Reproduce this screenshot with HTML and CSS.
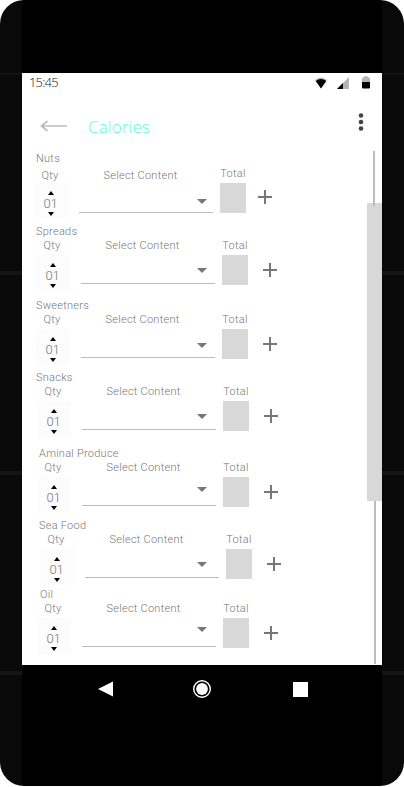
FILE: index.html
```html
<!DOCTYPE html>
<html lang="en">
<head>
<meta charset="utf-8">
<title>Calories</title>
<link rel="stylesheet" href="styles.css">
</head>
<body>
<div class="phone">
  <main class="screen">
    <header class="status">
      <span class="time">15:45</span>
      <svg class="status-icons" width="60" height="16" viewBox="0 0 60 16">
        <path d="M1 5Q7 0 13 5L7 13Z" fill="#b5b5b5"/><path d="M1.700 6Q7 2 12.300 6L7 13.500Z"/>
        <path d="M23 14L35 2V14Z" fill="#b5b5b5"/><path d="M23 14L29 8V14Z"/>
        <path d="M48 7V3.500Q48 2.500 49.500 2.500Q49.800 1 52 1Q54.200 1 54.500 2.500Q56 2.500 56 3.500V7Z" fill="#b5b5b5"/><path d="M48 7H56V12.500Q56 13.500 55 13.500H49Q48 13.500 48 12.500Z"/>
      </svg>
    </header>
    <nav class="toolbar">
      <svg class="back" width="28" height="14" viewBox="0 0 28 14" fill="none" stroke="#bdbdbd" stroke-width="1.700"><path d="M27 7H2M7.500 2L1.500 7L7.500 12"/></svg>
      <h1>Calories</h1>
      <svg class="more" width="6" height="20" viewBox="0 0 6 20" fill="#444"><circle cx="3" cy="3.500" r="2.300"/><circle cx="3" cy="10" r="2.300"/><circle cx="3" cy="16.500" r="2.300"/></svg>
    </nav>
    <div class="content">
      <div class="list" id="list"></div>
      <div class="scrollbar"><i class="track-top"></i><i class="thumb"></i><i class="track-bottom"></i></div>
    </div>
  </main>
  <footer class="navbar">
    <svg width="16" height="16" viewBox="0 0 16 16" fill="#fff"><path d="M0 8L15 .5V15.500Z"/></svg>
    <svg class="home" width="18" height="18" viewBox="0 0 18 18" fill="#fff"><circle cx="9" cy="9" r="8.300" fill="none" stroke="#fff" stroke-width="1.400"/><circle cx="9" cy="9" r="5.900"/></svg>
    <svg width="15" height="15" viewBox="0 0 15 15" fill="#fff"><path d="M0 0H15V15H0Z"/></svg>
  </footer>
</div>
<script src="app.js"></script>
</body>
</html>
```
FILE: styles.css
```css
* { box-sizing: border-box; }
body { margin: 0; background: #fff; font-family: Roboto, "Liberation Sans", sans-serif; }
.phone {
  width: 404px; height: 786px; padding: 73px 22px 0; border-radius: 24px; overflow: hidden;
  background:
    linear-gradient(#000, #000) 22px 0 / 360px 100% no-repeat,
    linear-gradient(#131313, #131313) 0 73px / 100% 2px no-repeat,
    linear-gradient(#151515, #151515) 0 271px / 100% 4px no-repeat,
    linear-gradient(#151515, #151515) 0 471px / 100% 4px no-repeat,
    linear-gradient(#151515, #151515) 0 671px / 100% 4px no-repeat,
    #090909;
}
.screen { height: 592px; background: #fff; overflow: hidden; }
.status { display: flex; justify-content: space-between; height: 20px; padding: 1px 8px 0 7px; }
.time { font: 300 13px/17px "Open Sans", sans-serif; letter-spacing: -.8px; color: #111; }
.status-icons { margin-top: 1px; }
.toolbar { display: flex; height: 58px; padding: 0 18px; }
.back { margin-top: 26px; }
.toolbar h1 { margin: 23px 0 0 20px; font: 300 17px/22px "Open Sans", sans-serif; letter-spacing: .1px; color: #5dffca; }
.more { margin: 19px 0 0 auto; }
.content { display: flex; justify-content: space-between; height: 514px; }
.group { --indent: 14px; --end: 8px; --drop: 15px; height: 72px; color: #777; font-weight: 300; font-size: 11px; line-height: 16px; letter-spacing: .25px; white-space: nowrap; }
.group h2 { margin: 0 0 0 14px; font: inherit; height: 14px; }
.fields { display: flex; padding-left: var(--indent); }
.qty { width: 34px; text-align: center; }
.qty label, .pick label, .total label { display: block; height: 17px; }
.qty label { padding-right: 2px; }
.stepper { display: flex; flex-direction: column; align-items: center; height: 36px; padding-top: 8px; background: #fcfcfc; }
.stepper span { height: 17px; font: 300 13px/18px Roboto, sans-serif; padding-right: 1px; letter-spacing: -.2px; color: #777; }
.stepper svg { display: block; }
.pick { width: 134px; margin-left: 11px; text-align: center; }
.pick label { padding-right: 11px; }
.select { display: flex; justify-content: flex-end; height: 29px; padding: calc(var(--drop) - 2px) var(--end) 0 0; border-bottom: 1px solid #bdbdbd; }
.total { width: 26px; margin-left: 7px; text-align: center; }
.total label { display: flex; justify-content: center; }
.box { height: 30px; background: #d8d8d8; }
.add { margin: 25px 0 0 15px; }
.group:nth-child(1) { --indent: 12px; --end: 6px; --drop: 16px; height: 73px; }
.group:nth-child(1) .fields { padding-top: 3px; }
.group:nth-child(1) .qty label { height: 15px; }
.group:nth-child(1) .stepper { height: 35px; }
.group:nth-child(1) .select { height: 28px; }
.group:nth-child(1) .total { margin-top: -2px; }
.group:nth-child(1) .add { margin: 22px 0 0 12px; }
.group:nth-child(2) { height: 74px; }
.group:nth-child(3) { --drop: 16px; }
.group:nth-child(4) { --indent: 15px; --end: 9px; height: 76px; }
.group:nth-child(5) { --indent: 15px; --end: 9px; --drop: 12px; }
.group:nth-child(6) { --indent: 18px; --end: 12px; height: 69px; }
.group:nth-child(7) { --indent: 15px; --end: 9px; --drop: 11px; }
.group:nth-child(5) h2, .group:nth-child(6) h2 { margin-left: 17px; }
.group:nth-child(7) h2 { margin-left: 18px; }
.scrollbar { display: flex; flex-direction: column; width: 15px; }
.track-top { width: 2px; height: 55px; margin-left: 6px; background: #bdbdbd; position: relative; z-index: 1; }
.thumb { width: 15px; height: 298px; margin-top: -3px; background: #d8d8d8; }
.track-bottom { width: 2px; height: 163px; margin-left: 7px; background: #bdbdbd; }
.navbar { display: flex; align-items: center; justify-content: space-between; height: 48px; padding: 0 74px 0 76px; }
.home { margin: 0 4px 0 0; }
```
FILE: app.js
```js
const names = ["Nuts", "Spreads", "Sweetners", "Snacks", "Aminal Produce", "Sea Food", "Oil"];
document.getElementById("list").innerHTML = names.map(name => `
  <section class="group">
    <h2>${name}</h2>
    <div class="fields">
      <div class="qty"><label>Qty</label>
        <div class="stepper">
          <svg width="6" height="4" viewBox="0 0 6 4"><path d="M0 4L3 0L6 4Z"/></svg>
          <span>01</span>
          <svg width="6" height="4" viewBox="0 0 6 4"><path d="M0 0H6L3 4Z"/></svg>
        </div>
      </div>
      <div class="pick"><label>Select Content</label>
        <div class="select"><svg width="10" height="5" viewBox="0 0 10 5"><path d="M0 0H10L5 5Z" fill="#777"/></svg></div>
      </div>
      <div class="total"><label>Total</label><div class="box"></div></div>
      <svg class="add" width="14" height="14" viewBox="0 0 14 14"><path d="M7 0V14M0 7H14" stroke="#777" stroke-width="2"/></svg>
    </div>
  </section>`).join("");
```
